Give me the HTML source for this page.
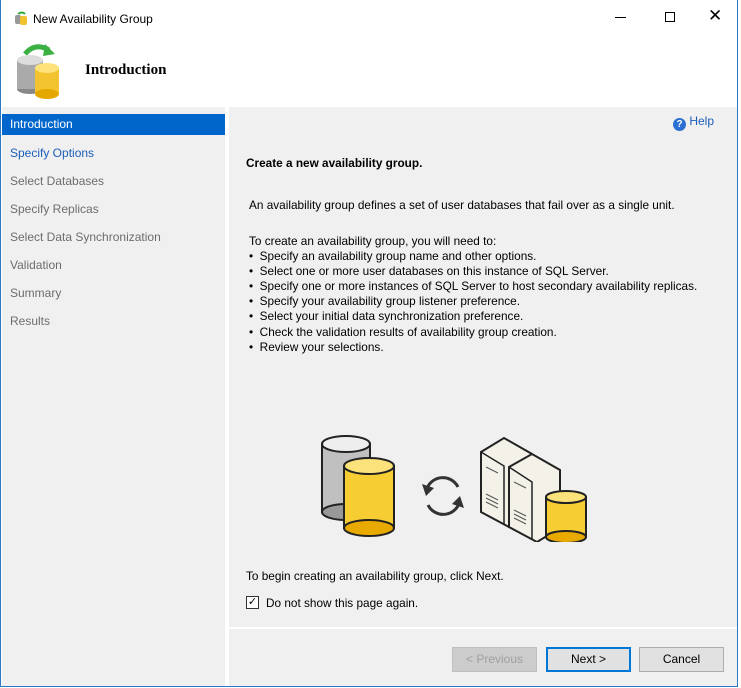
<!DOCTYPE html>
<html><head><style>
*{margin:0;padding:0;box-sizing:border-box}
body{width:741px;height:688px;background:#fff;font-family:"Liberation Sans",sans-serif;font-size:12px;color:#000;position:relative;overflow:hidden}
.win{position:absolute;left:0;top:0;width:738px;height:687px;border:1px solid #2b79c2;border-top:none;background:#fff}
.abs{position:absolute}
.nav{left:1px;top:107px;width:223px;height:579px;background:#f0f0f0}
.nav div{position:absolute;left:0;width:223px;height:28px;line-height:28px;padding-left:8px;color:#6d6d6d}
.nav .sel{background:#0066cc;color:#fff;height:21px;line-height:21px;top:7px}
.nav .lnk{color:#1c5db8}
.content{left:228px;top:107px;width:508px;height:520px;background:#f0f0f0}
.content .t{font-size:11.8px}
.bottom{left:228px;top:629px;width:508px;height:57px;background:#f0f0f0}
.btn{position:absolute;top:18px;height:25px;width:85px;border:1px solid #adadad;background:#e1e1e1;text-align:center;line-height:23px}
</style></head><body>
<div class="win">
<div class="abs" style="left:13px;top:11px;width:13px;height:14px">
<svg width="14" height="14"><rect x="1" y="4" width="6" height="9" rx="2" fill="#999"/><rect x="6" y="5" width="7" height="9" rx="2" fill="#f2c12e"/><path d="M4 3 Q8 0 11 3" stroke="#3a3" stroke-width="2" fill="none"/></svg></div>
<div class="abs" style="left:32px;top:12px;font-size:12px">New Availability Group</div>
<div class="abs" style="left:614px;top:17px;width:11px;border-top:1px solid #000"></div>
<div class="abs" style="left:664px;top:12px;width:10px;height:10px;border:1px solid #000"></div>
<div class="abs" style="left:707px;top:6px;font-size:17px;font-weight:300">✕</div>
<svg class="abs" style="left:14px;top:42px" width="50" height="58">
<path d="M10 12 Q20 0 34 8" stroke="#3cb043" stroke-width="5" fill="none"/><path d="M30 2 L40 12 L28 14Z" fill="#3cb043"/>
<ellipse cx="15" cy="47" rx="13" ry="5" fill="#888"/><rect x="2" y="18" width="26" height="29" fill="#aaa"/><ellipse cx="15" cy="18" rx="13" ry="5" fill="#ddd"/>
<rect x="20" y="26" width="24" height="26" fill="#f4c430"/><ellipse cx="32" cy="52" rx="12" ry="5" fill="#e5a800"/><ellipse cx="32" cy="26" rx="12" ry="5" fill="#fde27a"/></svg>
<div class="abs" style="left:84px;top:62px;font-size:15px;font-weight:bold;font-family:'Liberation Serif',serif">Introduction</div>
<div class="abs nav">
<div class="sel">Introduction</div>
<div class="lnk" style="top:32px">Specify Options</div>
<div style="top:60px">Select Databases</div><div style="top:88px">Specify Replicas</div><div style="top:116px">Select Data Synchronization</div><div style="top:144px">Validation</div><div style="top:172px">Summary</div><div style="top:200px">Results</div>
</div>
<div class="abs content">
<div class="abs" style="left:444px;top:7px;color:#1c5db8"><span style="display:inline-block;width:13px;height:13px;border-radius:50%;background:#2a6fd1;color:#fff;font-size:10px;text-align:center;line-height:13px;font-weight:bold;vertical-align:-2px">?</span> Help</div>
<div class="abs t" style="left:17px;top:49px;font-weight:bold">Create a new availability group.</div>
<div class="abs t" style="left:20px;top:91px">An availability group defines a set of user databases that fail over as a single unit.</div>
<div class="abs t" style="left:20px;top:127px;line-height:15.1px">To create an availability group, you will need to:<br>•&nbsp; Specify an availability group name and other options.<br>•&nbsp; Select one or more user databases on this instance of SQL Server.<br>•&nbsp; Specify one or more instances of SQL Server to host secondary availability replicas.<br>•&nbsp; Specify your availability group listener preference.<br>•&nbsp; Select your initial data synchronization preference.<br>•&nbsp; Check the validation results of availability group creation.<br>•&nbsp; Review your selections.</div>
<svg class="abs" style="left:85px;top:325px" width="275" height="110">
<rect x="8" y="12" width="48" height="68" fill="#c0c0c0" stroke="#222" stroke-width="2"/><ellipse cx="32" cy="12" rx="24" ry="8" fill="#eee" stroke="#222" stroke-width="2"/><ellipse cx="32" cy="80" rx="24" ry="8" fill="#999" stroke="#222" stroke-width="2"/>
<rect x="30" y="34" width="50" height="62" fill="#f6cd32" stroke="#222" stroke-width="2"/><ellipse cx="55" cy="96" rx="25" ry="8" fill="#e8a900" stroke="#222" stroke-width="2"/><ellipse cx="55" cy="34" rx="25" ry="8" fill="#fbe27a" stroke="#222" stroke-width="2"/>
<path d="M112 60 A17 17 0 0 1 144 55" stroke="#333" stroke-width="3" fill="none"/><path d="M146 68 A17 17 0 0 1 114 73" stroke="#333" stroke-width="3" fill="none"/>
<path d="M108 52 L112 64 L120 56Z" fill="#333"/><path d="M150 76 L146 64 L138 72Z" fill="#333"/>
<path d="M167 20 L190 6 L218 22 L218 80 L195 95 L167 80Z" fill="#f3f1e8" stroke="#222" stroke-width="2"/>
<path d="M167 20 L190 34 L190 92" stroke="#222" stroke-width="1.5" fill="none"/>
<path d="M195 35 L218 22 L246 38 L246 96 L223 110 L195 95Z" fill="#f3f1e8" stroke="#222" stroke-width="2"/>
<path d="M195 35 L218 50 L218 108" stroke="#222" stroke-width="1.5" fill="none"/>
<path d="M172 35 l12 6 M172 62 l12 6 M172 66 l12 6 M172 70 l12 6 M200 50 l12 6 M200 78 l12 6 M200 82 l12 6 M200 86 l12 6" stroke="#555" stroke-width="1"/>
<rect x="232" y="65" width="40" height="40" fill="#f6cd32" stroke="#222" stroke-width="2"/><ellipse cx="252" cy="105" rx="20" ry="6" fill="#e8a900" stroke="#222" stroke-width="2"/><ellipse cx="252" cy="65" rx="20" ry="6" fill="#fbe27a" stroke="#222" stroke-width="2"/>
</svg>
<div class="abs t" style="left:17px;top:462px">To begin creating an availability group, click Next.</div>
<div class="abs" style="left:17px;top:489px;width:13px;height:13px;border:1px solid #333;background:#fff;font-size:11px;line-height:11px;text-align:center">✓</div>
<div class="abs t" style="left:37px;top:489px">Do not show this page again.</div>
</div>
<div class="abs bottom">
<div class="btn" style="left:223px;color:#a0a0a0;border-color:#bfbfbf;background:#cccccc">&lt; Previous</div>
<div class="btn" style="left:317px;border:2px solid #0078d7;line-height:21px">Next &gt;</div>
<div class="btn" style="left:410px">Cancel</div>
</div>
</div>
</body></html>
